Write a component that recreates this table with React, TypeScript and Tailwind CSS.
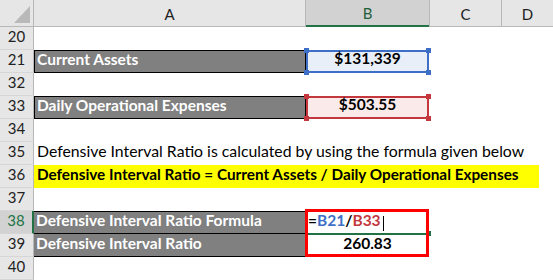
import React from "react";

const font = { fontFamily: "Lato, 'Open Sans', sans-serif" };

function RowHead({ n, sel }: { n: number; sel?: boolean }) {
  return (
    <div
      className={
        "w-[34px] shrink-0 flex items-end justify-center pb-[2px] text-[15px] border-b border-[#d6d6d6] " +
        (sel
          ? "bg-[#d2d2d2] text-[#217346] border-r-2 border-r-[#217346]"
          : "bg-[#e6e6e6] text-[#222] border-r border-r-[#b8b8b8]")
      }
    >
      {n}
    </div>
  );
}

function Handle({ cls, color }: { cls: string; color: string }) {
  return <div className={"absolute w-[5px] h-[5px] " + cls + " " + color} />;
}

export default function App() {
  return (
    <div className="w-[553px] h-[280px] bg-white overflow-hidden select-none" style={font}>
      {/* column header */}
      <div className="flex h-[27px] bg-[#e6e6e6] text-[15px] text-[#222]">
        <div className="w-[34px] shrink-0 relative border-r border-b border-[#b8b8b8]">
          <svg className="absolute left-[14px] top-[6px]" width="16" height="17" viewBox="0 0 16 17">
            <polygon points="16,0 16,17 0,17" fill="#b9b9b9" />
          </svg>
        </div>
        <div className="w-[272px] shrink-0 flex items-center justify-center pt-[2px] border-r border-b border-[#b8b8b8]">A</div>
        <div className="w-[123px] shrink-0 flex items-center justify-center pt-[2px] bg-[#d2d2d2] text-[#1f5f3a] border-b-2 border-[#217346]">B</div>
        <div className="w-[73px] shrink-0 flex items-center justify-center pt-[2px] border-l border-r border-b border-[#b8b8b8]">C</div>
        <div className="flex-1 flex items-center justify-center pt-[2px] border-b border-[#b8b8b8]">D</div>
      </div>

      {/* row 20 */}
      <div className="flex h-[23px]">
        <RowHead n={20} />
        <div className="flex-1" />
      </div>

      {/* row 21 */}
      <div className="flex h-[23px] text-[15.5px]">
        <RowHead n={21} />
        <div className="w-[272px] shrink-0 bg-[#808080] border border-black text-white font-bold flex items-end pl-[2px] pb-[1px] whitespace-nowrap">
          Current Assets
        </div>
        <div className="w-[123px] shrink-0 relative bg-[#e9eff9] border-2 border-[#3d6fc6] flex items-end justify-center pb-[1px] font-bold text-black">
          $131,339
          <Handle cls="-left-[4px] -top-[4px]" color="bg-[#3d6fc6]" />
          <Handle cls="-right-[4px] -top-[4px]" color="bg-[#3d6fc6]" />
          <Handle cls="-left-[4px] -bottom-[4px]" color="bg-[#3d6fc6]" />
          <Handle cls="-right-[4px] -bottom-[4px]" color="bg-[#3d6fc6]" />
        </div>
        <div className="flex-1" />
      </div>

      {/* row 32 */}
      <div className="flex h-[23px]">
        <RowHead n={32} />
        <div className="flex-1" />
      </div>

      {/* row 33 */}
      <div className="flex h-[23px] text-[15.5px]">
        <RowHead n={33} />
        <div className="w-[272px] shrink-0 bg-[#808080] border border-black text-white font-bold flex items-end pl-[2px] pb-[1px] whitespace-nowrap">
          Daily Operational Expenses
        </div>
        <div className="w-[123px] shrink-0 relative bg-[#fbeaea] border-2 border-[#c4373d] flex items-end justify-center pb-[1px] font-bold text-black">
          $503.55
          <Handle cls="-left-[4px] -top-[4px]" color="bg-[#c4373d]" />
          <Handle cls="-right-[4px] -top-[4px]" color="bg-[#c4373d]" />
          <Handle cls="-left-[4px] -bottom-[4px]" color="bg-[#c4373d]" />
          <Handle cls="-right-[4px] -bottom-[4px]" color="bg-[#c4373d]" />
        </div>
        <div className="flex-1" />
      </div>

      {/* row 34 */}
      <div className="flex h-[23px]">
        <RowHead n={34} />
        <div className="flex-1" />
      </div>

      {/* row 35 */}
      <div className="flex h-[23px] text-[15.8px]">
        <RowHead n={35} />
        <div className="flex-1 flex items-end pl-[3px] pb-[2px] text-black whitespace-nowrap">
          Defensive Interval Ratio is calculated by using the formula given below
        </div>
      </div>

      {/* row 36 */}
      <div className="flex h-[23px] text-[15.3px]">
        <RowHead n={36} />
        <div className="w-[505px] shrink-0 bg-[#ffff00] flex items-end pl-[3px] pb-[2px] font-bold text-black whitespace-nowrap">
          Defensive Interval Ratio = Current Assets / Daily Operational Expenses
        </div>
        <div className="flex-1" />
      </div>

      {/* row 37 */}
      <div className="flex h-[23px]">
        <RowHead n={37} />
        <div className="flex-1" />
      </div>

      {/* row 38 */}
      <div className="flex h-[23px] text-[15.5px]">
        <RowHead n={38} sel />
        <div className="w-[272px] shrink-0 bg-[#808080] border-t border-b border-r border-black text-white font-bold flex items-end pl-[2px] pb-[1px] whitespace-nowrap">
          Defensive Interval Ratio Formula
        </div>
        <div className="w-[123px] shrink-0 relative flex items-end pl-[2px] pb-[2px] font-bold">
          <span className="text-black">=</span>
          <span className="text-[#3d6fc6]">B21</span>
          <span className="text-black">/</span>
          <span className="text-[#c4373d]">B33</span>
          <span className="ml-[2px] mb-[1px] w-px h-[15px] bg-black" />
          <div className="absolute left-0 right-0 -bottom-[1px] h-[2px] bg-[#217346]" />
          <div className="absolute -right-[2px] -bottom-[2px] w-[5px] h-[5px] bg-[#217346]" />
          <div className="absolute -left-[1px] -top-[2px] w-[124px] h-[48px] border-[3px] border-[#ff0000]" />
        </div>
        <div className="flex-1" />
      </div>

      {/* row 39 */}
      <div className="flex h-[23px] text-[15.5px]">
        <RowHead n={39} />
        <div className="w-[272px] shrink-0 bg-[#808080] border-b border-r border-black text-white font-bold flex items-end pl-[2px] pb-[1px] whitespace-nowrap">
          Defensive Interval Ratio
        </div>
        <div className="w-[123px] shrink-0 flex items-end justify-center pb-[2px] font-bold text-black">
          260.83
        </div>
        <div className="flex-1" />
      </div>

      {/* row 40 */}
      <div className="flex h-[23px]">
        <RowHead n={40} />
        <div className="flex-1" />
      </div>
    </div>
  );
}
